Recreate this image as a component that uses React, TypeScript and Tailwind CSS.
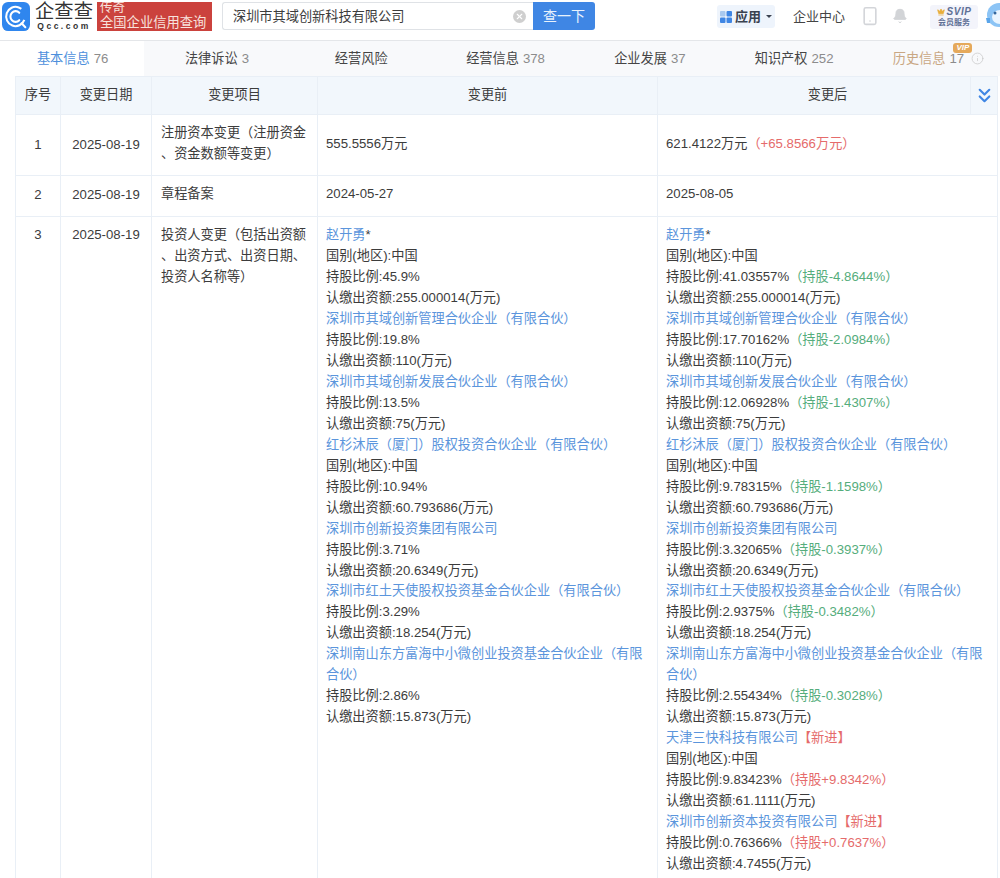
import { ChevronsDown, Info, Smartphone, Bell, X, Crown } from 'lucide-react';

type Line = { text: string; kind?: 'link' | 'plain'; note?: string; noteColor?: 'red' | 'green'; tag?: string; suffix?: string };

const font = { fontFamily: '"Liberation Sans", "Noto Sans CJK SC", sans-serif' };

const tabs = [
  { label: '基本信息', count: '76', active: true },
  { label: '法律诉讼', count: '3' },
  { label: '经营风险', count: '' },
  { label: '经营信息', count: '378' },
  { label: '企业发展', count: '37' },
  { label: '知识产权', count: '252' },
  { label: '历史信息', count: '17', vip: true },
];

const link = (text: string, extra: Partial<Line> = {}): Line => ({ text, kind: 'link', ...extra });
const plain = (text: string, extra: Partial<Line> = {}): Line => ({ text, ...extra });
const green = (text: string, note: string) => plain(text, { note, noteColor: 'green' });
const red = (text: string, note: string) => plain(text, { note, noteColor: 'red' });

const before: Line[] = [
  link('赵开勇', { suffix: '*' }),
  plain('国别(地区):中国'),
  plain('持股比例:45.9%'),
  plain('认缴出资额:255.000014(万元)'),
  link('深圳市其域创新管理合伙企业（有限合伙）'),
  plain('持股比例:19.8%'),
  plain('认缴出资额:110(万元)'),
  link('深圳市其域创新发展合伙企业（有限合伙）'),
  plain('持股比例:13.5%'),
  plain('认缴出资额:75(万元)'),
  link('红杉沐辰（厦门）股权投资合伙企业（有限合伙）'),
  plain('国别(地区):中国'),
  plain('持股比例:10.94%'),
  plain('认缴出资额:60.793686(万元)'),
  link('深圳市创新投资集团有限公司'),
  plain('持股比例:3.71%'),
  plain('认缴出资额:20.6349(万元)'),
  link('深圳市红土天使股权投资基金合伙企业（有限合伙）'),
  plain('持股比例:3.29%'),
  plain('认缴出资额:18.254(万元)'),
  link('深圳南山东方富海中小微创业投资基金合伙企业（有限合伙）'),
  plain('持股比例:2.86%'),
  plain('认缴出资额:15.873(万元)'),
];

const after: Line[] = [
  link('赵开勇', { suffix: '*' }),
  plain('国别(地区):中国'),
  green('持股比例:41.03557%', '（持股-4.8644%）'),
  plain('认缴出资额:255.000014(万元)'),
  link('深圳市其域创新管理合伙企业（有限合伙）'),
  green('持股比例:17.70162%', '（持股-2.0984%）'),
  plain('认缴出资额:110(万元)'),
  link('深圳市其域创新发展合伙企业（有限合伙）'),
  green('持股比例:12.06928%', '（持股-1.4307%）'),
  plain('认缴出资额:75(万元)'),
  link('红杉沐辰（厦门）股权投资合伙企业（有限合伙）'),
  plain('国别(地区):中国'),
  green('持股比例:9.78315%', '（持股-1.1598%）'),
  plain('认缴出资额:60.793686(万元)'),
  link('深圳市创新投资集团有限公司'),
  green('持股比例:3.32065%', '（持股-0.3937%）'),
  plain('认缴出资额:20.6349(万元)'),
  link('深圳市红土天使股权投资基金合伙企业（有限合伙）'),
  green('持股比例:2.9375%', '（持股-0.3482%）'),
  plain('认缴出资额:18.254(万元)'),
  link('深圳南山东方富海中小微创业投资基金合伙企业（有限合伙）'),
  green('持股比例:2.55434%', '（持股-0.3028%）'),
  plain('认缴出资额:15.873(万元)'),
  link('天津三快科技有限公司', { tag: '【新进】' }),
  plain('国别(地区):中国'),
  red('持股比例:9.83423%', '（持股+9.8342%）'),
  plain('认缴出资额:61.1111(万元)'),
  link('深圳市创新资本投资有限公司', { tag: '【新进】' }),
  red('持股比例:0.76366%', '（持股+0.7637%）'),
  plain('认缴出资额:4.7455(万元)'),
];

function Lines({ lines }: { lines: Line[] }) {
  return (
    <>
      {lines.map((l, i) => (
        <div key={i}>
          <span className={l.kind === 'link' ? 'text-[#5b95dc]' : ''}>{l.text}</span>
          {l.suffix}
          {l.note && <span className={l.noteColor === 'red' ? 'text-[#e56b6b]' : 'text-[#55ad7c]'}>{l.note}</span>}
          {l.tag && <span className="text-[#e56b6b]">{l.tag}</span>}
        </div>
      ))}
    </>
  );
}

function Logo() {
  return (
    <svg width="28" height="29" viewBox="0 0 30 30" preserveAspectRatio="none" className="shrink-0">
      <rect x="0" y="0" width="30" height="30" rx="6.5" fill="#2f86ee" />
      <circle cx="14.5" cy="15" r="10" fill="none" stroke="#fff" strokeWidth="2.2" strokeDasharray="50 13" transform="rotate(20 14.5 15)" />
      <path d="M18.5 11.2a5.5 5.5 0 1 0 0 7.6" fill="none" stroke="#fff" strokeWidth="2.2" strokeLinecap="round" />
      <path d="M21 22l4 4" stroke="#fff" strokeWidth="2.2" strokeLinecap="round" />
    </svg>
  );
}

function Penguin() {
  return (
    <svg width="15" height="26" viewBox="0 0 15 26" className="shrink-0">
      <circle cx="13" cy="13" r="12" fill="#8cc4f5" />
      <ellipse cx="14" cy="15" rx="8" ry="7" fill="#eaf5ff" />
      <circle cx="9" cy="11" r="1.5" fill="#33669c" />
      <path d="M0 16h4v5H1z" fill="#5aa5ea" />
    </svg>
  );
}

function Divider() {
  return <span className="mt-[6px] h-[17px] w-px shrink-0 bg-[#f0f1f3]" />;
}

export default function App() {
  return (
    <div className="h-[878px] w-[1000px] overflow-hidden bg-white text-[13.2px] text-[#3c3c3c]" style={font}>
      {/* top bar */}
      <div className="flex h-[41px] items-start border-b border-[#e4e6e9] pt-[2px]">
        <div className="ml-[2px]"><Logo /></div>
        <div className="ml-[5px] flex w-[58px] shrink-0 flex-col items-center text-[#333]">
          <span className="text-[19.3px] leading-[20px] whitespace-nowrap">企查查</span>
          <span className="text-[8.5px] leading-[8px] font-bold tracking-[2.5px] whitespace-nowrap">Qcc.com</span>
        </div>
        <div className="ml-[4px] h-[29px] w-[115px] shrink-0 overflow-hidden bg-[#cb423d] pl-[3px] text-[13.3px] text-[#f8e3dd]">
          <div className="text-[12.5px] leading-[13px]">传奇</div>
          <div className="leading-[16px] whitespace-nowrap">全国企业信用查询</div>
        </div>
        <div className="ml-[10px] flex h-[28px] w-[311px] shrink-0 items-center rounded-l-[3px] border border-r-0 border-[#dfe2e6] pl-[10px] pt-px text-[13.2px]">
          <span className="flex-1">深圳市其域创新科技有限公司</span>
          <span className="mr-[7px] flex h-[13px] w-[13px] items-center justify-center rounded-full bg-[#cfcfcf]">
            <X size={9} strokeWidth={3} className="text-white" />
          </span>
        </div>
        <div className="flex h-[28px] w-[62px] shrink-0 items-center justify-center rounded-r-[3px] bg-[#3f86e4] text-[14px] text-[#e8f1fc]">查一下</div>
        <div className="ml-[122px] mt-[3px] flex h-[23px] w-[58px] shrink-0 items-center rounded-[3px] bg-[#eef4fc] pl-[3px] text-[13px] font-bold text-[#3a4250]">
          <svg width="12" height="12" viewBox="0 0 12 12" className="shrink-0">
            <rect x="0" y="0" width="5.5" height="5.5" rx="1" fill="#a9c9ef" />
            <rect x="6.5" y="0" width="5.5" height="5.5" rx="1" fill="#3f86e4" />
            <rect x="0" y="6.5" width="5.5" height="5.5" rx="1" fill="#3f86e4" />
            <rect x="6.5" y="6.5" width="5.5" height="5.5" rx="1" fill="#3f86e4" />
          </svg>
          <span className="ml-[3px] whitespace-nowrap">应用</span>
          <span className="ml-[5px] h-0 w-0 border-x-[3px] border-t-[3px] border-x-transparent border-t-[#3a4250]" />
        </div>
        <span className="ml-[10px]"><Divider /></span>
        <span className="ml-[8px] mt-[5px] whitespace-nowrap text-[13px] text-[#444]">企业中心</span>
        <span className="ml-[10px]"><Divider /></span>
        <Smartphone size={20} strokeWidth={1.9} className="ml-[5px] mt-[4px] shrink-0 text-[#d3d5d9]" />
        <Bell size={16} fill="#d2d4d7" strokeWidth={1.5} className="ml-[12px] mt-[6px] shrink-0 text-[#d2d4d7]" />
        <span className="ml-[13px]"><Divider /></span>
        <div className="ml-[9px] mt-[3px] flex h-[24px] w-[48px] shrink-0 flex-col items-center justify-center rounded-[3px] bg-[#f3f4fb] text-[#5f7096]">
          <div className="flex items-center text-[10px] leading-[11px] font-bold italic tracking-[0.5px]">
            <Crown size={8} fill="#e9ad3a" className="mr-[2px] text-[#e9ad3a]" />SVIP
          </div>
          <div className="text-[8px] leading-[11px] font-bold whitespace-nowrap">会员服务</div>
        </div>
        <div className="ml-[8px]"><Penguin /></div>
      </div>

      {/* tabs */}
      <div className="flex h-[35px] w-[1012px] bg-[#f8f9fb]">
        {tabs.map((t) => (
          <div
            key={t.label}
            className={`flex w-[144.3px] shrink-0 items-center justify-center whitespace-nowrap pl-px ${t.active ? 'bg-white' : ''}`}
          >
            <span className={t.active ? 'text-[#4d8fdc]' : t.vip ? 'text-[#c9a783]' : 'text-[#454545]'}>{t.label}</span>
            {t.count && (
              <span className="relative ml-[4px] text-[#8c8c8c]">
                {t.count}
                {t.vip && (
                  <span className="absolute -top-[6px] left-[4px] rounded-[3px] bg-[#e5a95b] px-[3px] text-[8px] leading-[10px] font-bold italic text-white">
                    VIP
                  </span>
                )}
              </span>
            )}
            {t.vip && <Info size={13} strokeWidth={1.4} className="ml-[7px] text-[#c9c9c9]" />}
          </div>
        ))}
      </div>

      {/* change records */}
      <div className="relative ml-[15px] w-[982px]">
        <table className="w-full table-fixed border-collapse leading-[20.97px]">
          <colgroup>
            <col className="w-[45px]" />
            <col className="w-[91px]" />
            <col className="w-[166px]" />
            <col className="w-[340px]" />
            <col className="w-[340px]" />
          </colgroup>
          <thead>
            <tr className="h-[38px] bg-[#f2f7fc] text-center font-normal">
              <th className="border border-[#e9eff6] font-normal">序号</th>
              <th className="border border-[#e9eff6] font-normal">变更日期</th>
              <th className="border border-[#e9eff6] font-normal">变更项目</th>
              <th className="border border-[#e9eff6] font-normal">变更前</th>
              <th className="border border-[#e9eff6] font-normal">变更后</th>
            </tr>
          </thead>
          <tbody>
            <tr className="h-[61px]">
              <td className="border border-[#e9eff6] text-center">1</td>
              <td className="border border-[#e9eff6] text-center">2025-08-19</td>
              <td className="border border-[#e9eff6] pb-[2px] pl-[9px] pr-[7px]">
                注册资本变更（注册资金<br />、资金数额等变更）
              </td>
              <td className="border border-[#e9eff6] px-[8px] pb-[2px]">555.5556万元</td>
              <td className="border border-[#e9eff6] px-[8px] pb-[2px]">
                621.4122万元<span className="text-[#e56b6b]">（+65.8566万元）</span>
              </td>
            </tr>
            <tr className="h-[41px]">
              <td className="border border-[#e9eff6] pb-[2px] text-center">2</td>
              <td className="border border-[#e9eff6] pb-[2px] text-center">2025-08-19</td>
              <td className="border border-[#e9eff6] pb-[3px] pl-[9px] pr-[7px]">章程备案</td>
              <td className="border border-[#e9eff6] px-[8px] pb-[3px]">2024-05-27</td>
              <td className="border border-[#e9eff6] px-[8px] pb-[3px]">2025-08-05</td>
            </tr>
            <tr className="align-top">
              <td className="border border-[#e9eff6] pt-[8px] text-center">3</td>
              <td className="border border-[#e9eff6] pt-[8px] text-center">2025-08-19</td>
              <td className="border border-[#e9eff6] pl-[9px] pr-[7px] pt-[8px]">
                投资人变更（包括出资额<br />、出资方式、出资日期、<br />投资人名称等）
              </td>
              <td className="border border-[#e9eff6] px-[8px] pt-[8px]"><Lines lines={before} /></td>
              <td className="border border-[#e9eff6] px-[8px] pb-[24px] pt-[8px]"><Lines lines={after} /></td>
            </tr>
          </tbody>
        </table>
        <div className="absolute right-0 top-0 flex h-[38px] w-[27px] items-center justify-center border-l border-[#e9eff6]">
          <ChevronsDown size={23} strokeWidth={2.2} className="text-[#3f86e4]" />
        </div>
      </div>
    </div>
  );
}
